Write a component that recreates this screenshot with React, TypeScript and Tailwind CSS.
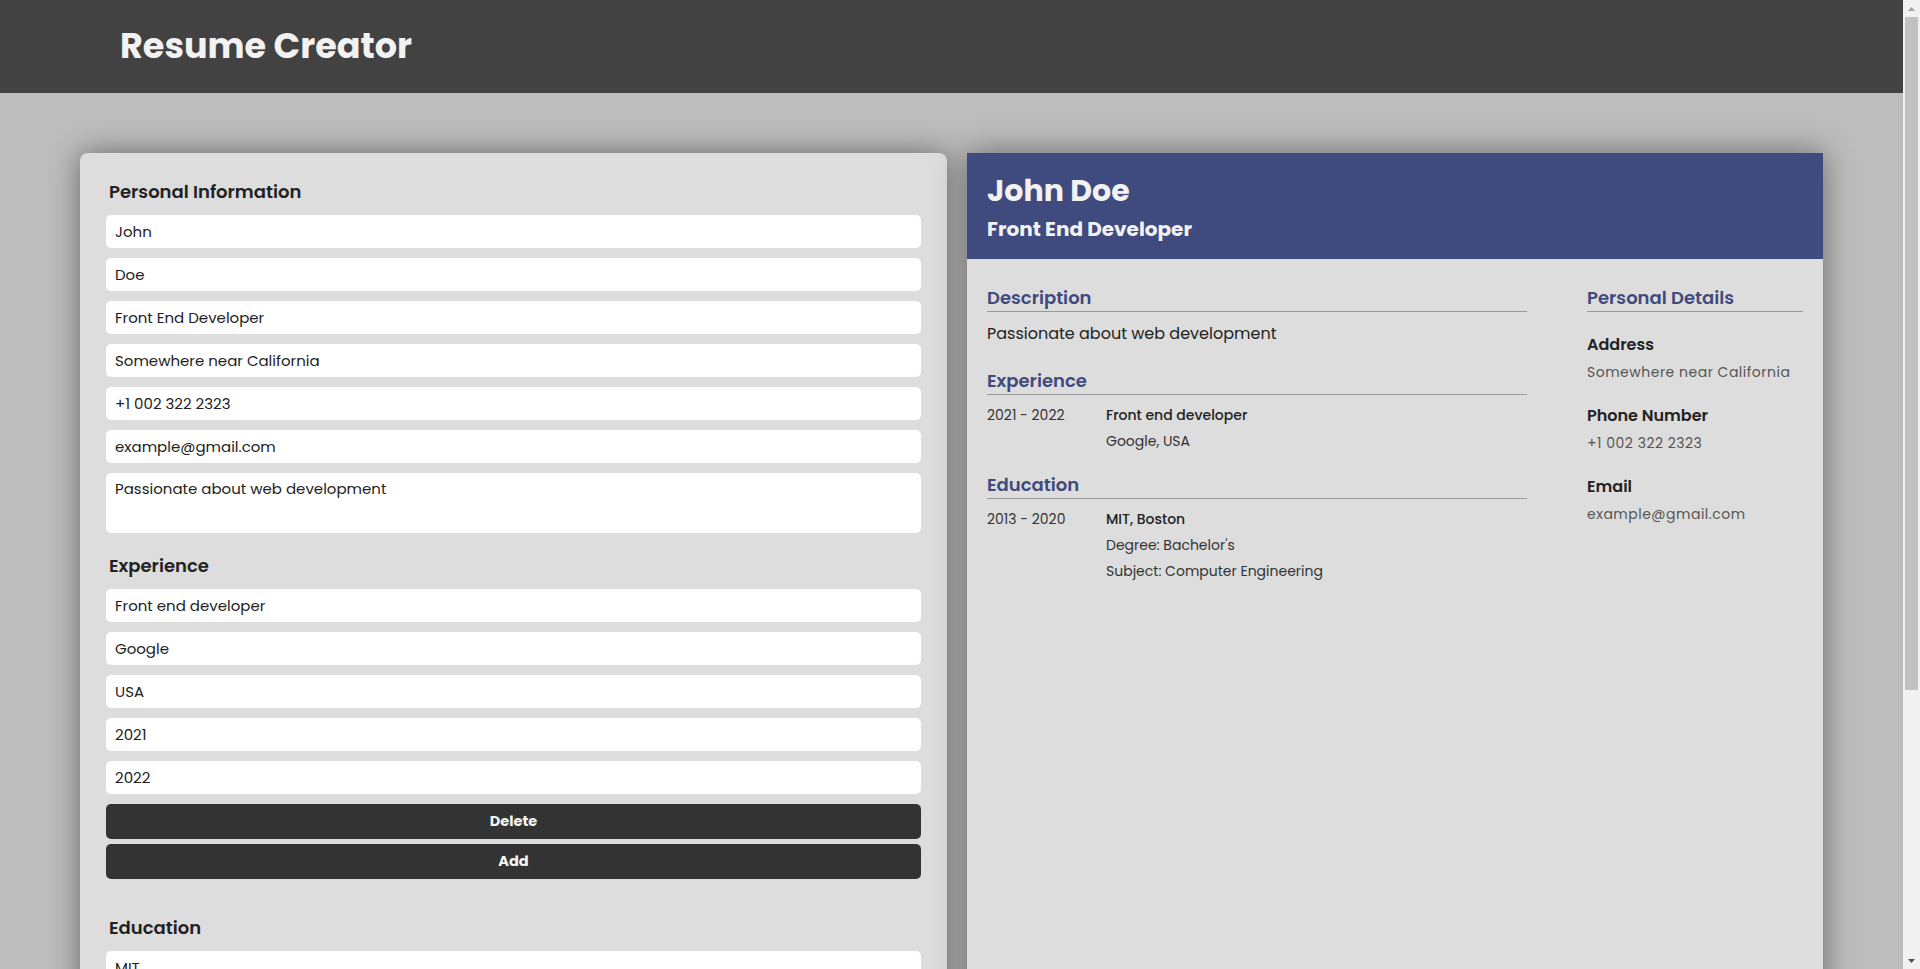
const personal = [
  "John",
  "Doe",
  "Front End Developer",
  "Somewhere near California",
  "+1 002 322 2323",
  "example@gmail.com",
];

const experience = ["Front end developer", "Google", "USA", "2021", "2022"];

const education = ["MIT", "Boston", "Bachelor's", "Computer Engineering", "2013", "2020"];

function Field({ value }: { value: string }) {
  return (
    <input
      type="text"
      defaultValue={value}
      className="h-[33px] w-full rounded-[5px] bg-white px-[9px] text-[15px] text-[#222] outline-none"
    />
  );
}

function FormHeading({ children }: { children: React.ReactNode }) {
  return (
    <h2 className="mb-[9px] pl-[3px] text-[18px] font-semibold leading-[28px] text-[#222]">{children}</h2>
  );
}

function Buttons() {
  return (
    <div className="mt-[10px] flex flex-col gap-[5px]">
      <button className="h-[35px] w-full rounded-[5px] bg-[#333333] text-[14.5px] font-bold text-[#f5f5f5]">
        Delete
      </button>
      <button className="h-[35px] w-full rounded-[5px] bg-[#333333] text-[14.5px] font-bold text-[#f5f5f5]">
        Add
      </button>
    </div>
  );
}

function ResumeHeading({ children }: { children: React.ReactNode }) {
  return (
    <h3 className="border-b border-[#999999] text-[18px] font-semibold leading-[27px] text-[#3f4a7e]">
      {children}
    </h3>
  );
}

function Detail({ label, value, first }: { label: string; value: string; first?: boolean }) {
  return (
    <div className={first ? "mt-[22px]" : "mt-[23px]"}>
      <div className="text-[16px] font-semibold leading-[22px] text-[#222]">{label}</div>
      <div className="mt-[6px] text-[14px] leading-[20px] tracking-[0.5px] text-[#555]">{value}</div>
    </div>
  );
}

// fake classic scrollbar, the screenshot shows one at the right edge
function ScrollBar() {
  return (
    <div className="flex h-full w-[17px] shrink-0 flex-col bg-[#f1f1f1]">
      <div className="flex h-[17px] items-center justify-center">
        <svg width="9" height="6" viewBox="0 0 9 6">
          <polygon points="4.5,1 8,5 1,5" fill="#a3a3a3" />
        </svg>
      </div>
      <div className="px-[2px]">
        <div className="h-[673px] bg-[#c1c1c1]" />
      </div>
      <div className="flex-1" />
      <div className="flex h-[17px] items-center justify-center">
        <svg width="9" height="6" viewBox="0 0 9 6">
          <polygon points="1,1 8,1 4.5,5" fill="#505050" />
        </svg>
      </div>
    </div>
  );
}

export default function App() {
  return (
    <div className="flex h-screen bg-[#bdbdbd] font-['Poppins','Open_Sans',sans-serif]">
      <div className="flex-1 overflow-y-auto [scrollbar-width:none]">
        <header className="flex h-[93px] items-center bg-[#424242] px-[120px]">
          <h1 className="text-[35px] font-bold text-[#f2f2f2]">Resume Creator</h1>
        </header>

        <main className="flex items-stretch gap-5 px-20 pb-[40px] pt-[60px]">
          <div className="w-[867px] shrink-0 rounded-lg bg-[#dddddd] px-[26px] pb-[24px] pt-[25px] shadow-[0_0_30px_rgba(0,0,0,0.45)]">
            <section>
              <FormHeading>Personal Information</FormHeading>
              <div className="flex flex-col gap-[10px]">
                {personal.map((v) => (
                  <Field key={v} value={v} />
                ))}
                <textarea
                  defaultValue="Passionate about web development"
                  className="h-[60px] w-full resize-none rounded-[5px] bg-white px-[9px] py-[5px] text-[15px] text-[#222] outline-none"
                />
              </div>
            </section>

            <section className="mt-[19px]">
              <FormHeading>Experience</FormHeading>
              <div className="flex flex-col gap-[10px]">
                {experience.map((v) => (
                  <Field key={v} value={v} />
                ))}
              </div>
              <Buttons />
            </section>

            <section className="mt-[35px]">
              <FormHeading>Education</FormHeading>
              <div className="flex flex-col gap-[10px]">
                {education.map((v) => (
                  <Field key={v} value={v} />
                ))}
              </div>
              <Buttons />
            </section>
          </div>

          <div className="flex-1 bg-[#dddddd] shadow-[0_0_30px_rgba(0,0,0,0.45)]">
            <div className="h-[106px] bg-[#3f4a7e] px-5 pt-[20px] text-[#f2f2f2]">
              <div className="text-[30px] font-bold leading-[1.2]">John Doe</div>
              <div className="mt-[8px] text-[20px] font-bold leading-[1.2]">Front End Developer</div>
            </div>

            <div className="grid grid-cols-[5fr_2fr] gap-[60px] px-5 pt-[25px]">
              <div>
                <ResumeHeading>Description</ResumeHeading>
                <p className="mt-[10px] text-[16px] leading-[24px] text-[#222]">
                  Passionate about web development
                </p>

                <div className="mt-[21px]">
                  <ResumeHeading>Experience</ResumeHeading>
                  <div className="mt-[7px] grid grid-cols-[119px_1fr] text-[14px] leading-[26px] text-[#333]">
                    <div>2021 - 2022</div>
                    <div>
                      <div className="font-medium text-[#222]">Front end developer</div>
                      <div>Google, USA</div>
                    </div>
                  </div>
                </div>

                <div className="mt-[17px]">
                  <ResumeHeading>Education</ResumeHeading>
                  <div className="mt-[7px] grid grid-cols-[119px_1fr] text-[14px] leading-[26px] text-[#333]">
                    <div>2013 - 2020</div>
                    <div>
                      <div className="font-medium text-[#222]">MIT, Boston</div>
                      <div>Degree: Bachelor's</div>
                      <div>Subject: Computer Engineering</div>
                    </div>
                  </div>
                </div>
              </div>

              <div>
                <ResumeHeading>Personal Details</ResumeHeading>
                <Detail first label="Address" value="Somewhere near California" />
                <Detail label="Phone Number" value="+1 002 322 2323" />
                <Detail label="Email" value="example@gmail.com" />
              </div>
            </div>
          </div>
        </main>
      </div>
      <ScrollBar />
    </div>
  );
}
